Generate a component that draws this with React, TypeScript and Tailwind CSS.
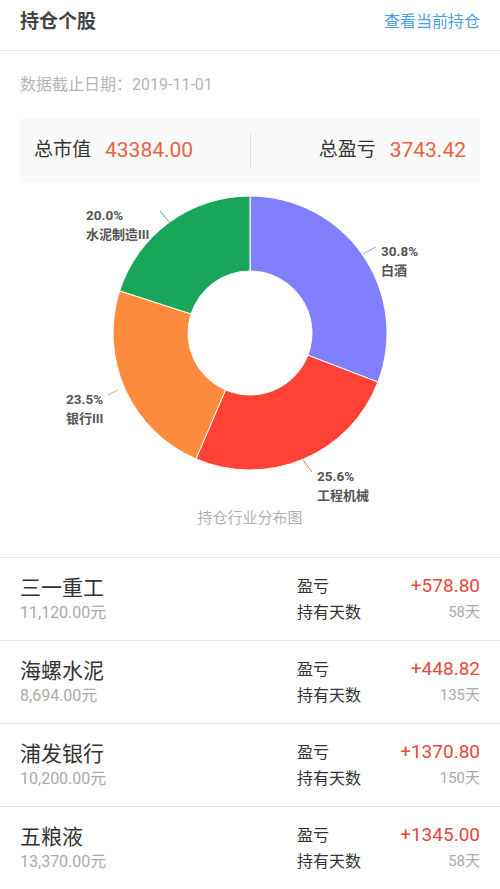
import React from 'react';

// Industry distribution of the holdings
const slices = [
  { name: '白酒', pct: 30.8, color: '#8080ff' },
  { name: '工程机械', pct: 25.6, color: '#ff4136' },
  { name: '银行III', pct: 23.5, color: '#fd8b3d' },
  { name: '水泥制造III', pct: 20.0, color: '#19a65a' },
];

// label layout in svg coords (x, baseline of first line) plus leader line
const labels = [
  { x: 381, y: 73, line: 'M363 71 L376 64' },
  { x: 317, y: 298, line: 'M303 277 L312 289' },
  { x: 66, y: 221, line: 'M108 212 L118 207' },
  { x: 86, y: 37, line: 'M160 28 L169 39' },
];

const stocks = [
  { name: '三一重工', amount: '11,120.00元', profit: '+578.80', days: '58天' },
  { name: '海螺水泥', amount: '8,694.00元', profit: '+448.82', days: '135天' },
  { name: '浦发银行', amount: '10,200.00元', profit: '+1370.80', days: '150天' },
  { name: '五粮液', amount: '13,370.00元', profit: '+1345.00', days: '58天' },
];

const CX = 250;
const CY = 150;
const R = 137;
const r = 62;

const point = (rad: number, deg: number) => {
  const a = (deg - 90) * (Math.PI / 180);
  return [CX + rad * Math.cos(a), CY + rad * Math.sin(a)];
};

const arcPath = (start: number, end: number) => {
  const large = end - start > 180 ? 1 : 0;
  const [x1, y1] = point(R, start);
  const [x2, y2] = point(R, end);
  const [x3, y3] = point(r, end);
  const [x4, y4] = point(r, start);
  return `M${x1} ${y1} A${R} ${R} 0 ${large} 1 ${x2} ${y2} L${x3} ${y3} A${r} ${r} 0 ${large} 0 ${x4} ${y4} Z`;
};

const DonutChart: React.FC = () => {
  const total = slices.reduce((s, x) => s + x.pct, 0);
  let acc = 0;
  return (
    <svg width="500" height="325" viewBox="0 0 500 325" className="block">
      {slices.map((s, i) => {
        const start = (acc / total) * 360;
        acc += s.pct;
        const end = (acc / total) * 360;
        return <path key={i} d={arcPath(start, end)} fill={s.color} stroke="#ffffff" strokeWidth="1" />;
      })}
      {slices.map((s, i) => (
        <g key={'l' + i}>
          <path d={labels[i].line} stroke={s.color} strokeWidth="0.8" fill="none" />
          <text x={labels[i].x} y={labels[i].y} fontSize="13.5" fontWeight="700" fill="#555555">
            {s.pct.toFixed(1)}%
          </text>
          <text x={labels[i].x} y={labels[i].y + 19} fontSize="13" fontWeight="700" fill="#555555">
            {s.name}
          </text>
        </g>
      ))}
    </svg>
  );
};

export default function App() {
  return (
    <div
      className="w-[500px] min-h-[889px] bg-white"
      style={{ fontFamily: 'Roboto, "Noto Sans CJK SC", sans-serif' }}
    >
      {/* Header */}
      <div className="h-[51px] flex items-center justify-between px-5 pb-[6px] border-b border-[#e3e3e3]">
        <span className="text-[19px] font-bold text-[#444444]">持仓个股</span>
        <span className="text-[16px] text-[#4a9fe3]">查看当前持仓</span>
      </div>

      {/* Date */}
      <div className="px-5 pt-[24px] text-[16px] leading-[20px] text-[#b5b5b5]">数据截止日期：2019-11-01</div>

      {/* Summary */}
      <div className="mx-5 mt-[23px] h-[65px] bg-[#fafafa] flex items-center">
        <div className="flex-1 flex items-center pl-[14px] gap-[14px]">
          <span className="text-[19px] text-[#333333]">总市值</span>
          <span className="text-[21px] text-[#ea6140]">43384.00</span>
        </div>
        <div className="w-px h-[34px] bg-[#dddddd]" />
        <div className="flex-1 flex items-center justify-end pr-[14px] gap-[14px]">
          <span className="text-[19px] text-[#333333]">总盈亏</span>
          <span className="text-[21px] text-[#ea6140]">3743.42</span>
        </div>
      </div>

      {/* Chart */}
      <DonutChart />
      <div className="text-center text-[15px] leading-[20px] text-[#b0b0b0]">持仓行业分布图</div>

      {/* Holdings list */}
      <div className="mt-[29px] border-t border-[#e3e3e3]">
        {stocks.map((s) => (
          <div key={s.name} className="h-[83px] flex items-center px-5 border-b border-[#e3e3e3]">
            <div className="flex-1 flex flex-col">
              <span className="text-[21px] leading-[28px] text-[#333333]">{s.name}</span>
              <span className="text-[16px] leading-[22px] text-[#aaaaaa]">{s.amount}</span>
            </div>
            <div className="w-[183px] flex flex-col">
              <div className="flex items-center justify-between h-[27px]">
                <span className="text-[16px] text-[#333333]">盈亏</span>
                <span className="text-[19px] text-[#e8483c]">{s.profit}</span>
              </div>
              <div className="flex items-center justify-between h-[25px]">
                <span className="text-[16px] text-[#333333]">持有天数</span>
                <span className="text-[15px] text-[#aaaaaa]">{s.days}</span>
              </div>
            </div>
          </div>
        ))}
      </div>
    </div>
  );
}
